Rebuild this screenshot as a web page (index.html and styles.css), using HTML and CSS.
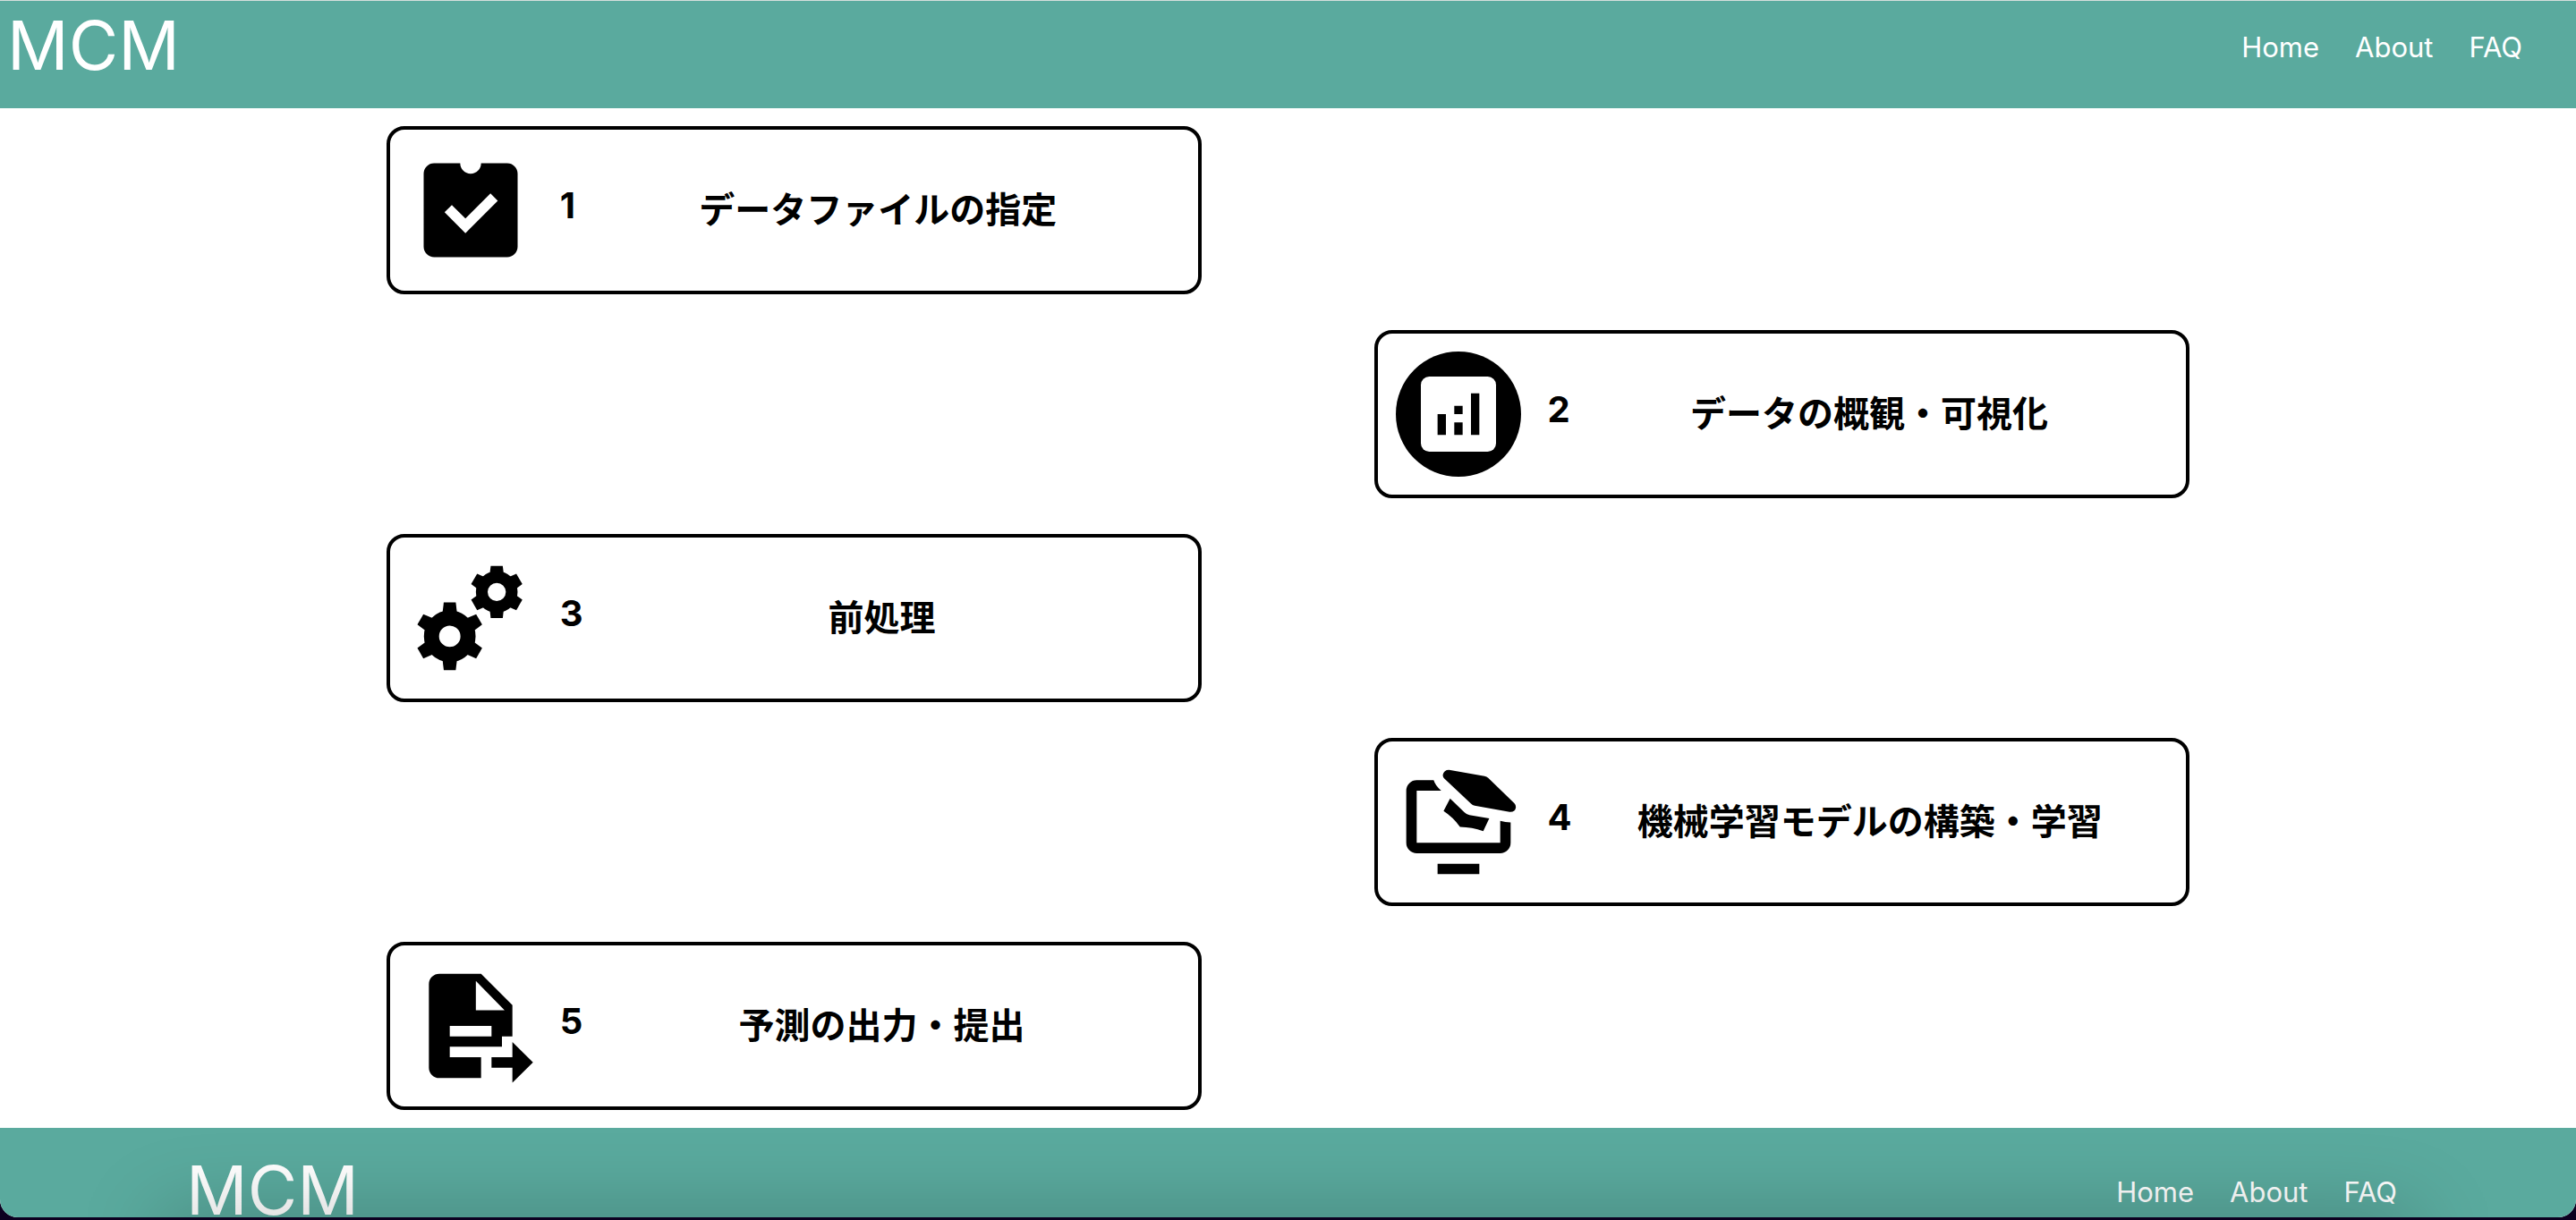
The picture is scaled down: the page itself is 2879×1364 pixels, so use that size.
FILE: index.html
```html
<!DOCTYPE html>
<html lang="ja">
<head>
<meta charset="utf-8">
<meta name="viewport" content="width=device-width, initial-scale=1">
<title>MCM</title>
<link rel="stylesheet" href="styles.css">
</head>
<body>
<div class="window">
  <header class="bar header">
    <a class="logo" href="#">MCM</a>
    <nav class="nav" aria-label="Main">
      <a href="#">Home</a>
      <a href="#">About</a>
      <a href="#">FAQ</a>
    </nav>
  </header>

  <main class="steps">
    <a class="card" href="#">
      <svg class="icon" viewBox="0 0 24 24" aria-hidden="true">
        <path fill-rule="evenodd" d="M5 3H10A2 2 0 0 0 14 3H19A2 2 0 0 1 21 5V19A2 2 0 0 1 19 21H5A2 2 0 0 1 3 19V5A2 2 0 0 1 5 3ZM7 12.4L11 16.4L17.2 10.2L15.8 8.8L11 13.6L8.4 11Z"/>
      </svg>
      <span class="number">1</span>
      <span class="title">データファイルの指定</span>
    </a>

    <a class="card card-right" href="#">
      <svg class="icon" viewBox="0 0 24 24" aria-hidden="true">
        <circle cx="12" cy="12" r="12"/>
        <rect x="4.8" y="4.8" width="14.4" height="14.4" rx="1.6" fill="#fff"/>
        <path d="M8 12H9.6V16H8ZM11.2 10.4H12.8V12H11.2ZM11.2 13.6H12.8V16H11.2ZM14.4 8H16V16H14.4Z"/>
      </svg>
      <span class="number">2</span>
      <span class="title">データの概観・可視化</span>
    </a>

    <a class="card" href="#">
      <svg class="icon" viewBox="0 0 24 24" aria-hidden="true">
        <defs>
          <path id="tooth-large" d="M-1.15 -6.5H1.15L1.4 -4.4H-1.4Z"/>
          <path id="tooth-small" d="M-1.15 -5H1.15L1.35 -3.3H-1.35Z"/>
        </defs>
        <g transform="translate(8 15.5)">
          <circle r="3.5" fill="none" stroke="#000" stroke-width="2.9"/>
          <use href="#tooth-large"/>
          <use href="#tooth-large" transform="rotate(60)"/>
          <use href="#tooth-large" transform="rotate(120)"/>
          <use href="#tooth-large" transform="rotate(180)"/>
          <use href="#tooth-large" transform="rotate(240)"/>
          <use href="#tooth-large" transform="rotate(300)"/>
        </g>
        <g transform="translate(17 7)">
          <circle r="2.87" fill="none" stroke="#000" stroke-width="2.25"/>
          <use href="#tooth-small"/>
          <use href="#tooth-small" transform="rotate(60)"/>
          <use href="#tooth-small" transform="rotate(120)"/>
          <use href="#tooth-small" transform="rotate(180)"/>
          <use href="#tooth-small" transform="rotate(240)"/>
          <use href="#tooth-small" transform="rotate(300)"/>
        </g>
      </svg>
      <span class="number">3</span>
      <span class="title">前処理</span>
    </a>

    <a class="card card-right" href="#">
      <svg class="icon" viewBox="0 0 24 24" aria-hidden="true">
        <path d="M7.25 4H4A2 2 0 0 0 2 6V16A2 2 0 0 0 4 18H20A2 2 0 0 0 22 16V12.1Q21 12.1 20 11.8V16H4V6H8.7Q7.6 5.1 7.25 4ZM8 20H16V22H8Z"/>
        <path d="M10.2 2L17 3.2Q17.4 3.25 17.7 3.55L22.7 8.4Q23 8.7 23 9.15Q22.9 10.1 21.8 10.05L15.1 8.85Q14.7 8.8 14.4 8.5L9.3 3.7Q9 3.4 9 3Q9.2 2 10.2 2Z"/>
        <path d="M10.4 7.5L13.1 10.1Q13.5 10.5 14.1 10.65L17.9 11.3L16.75 13.75Q14.6 13 12.3 12.95Q11 11.1 9.15 9.9Z"/>
      </svg>
      <span class="number">4</span>
      <span class="title">機械学習モデルの構築・学習</span>
    </a>

    <a class="card" href="#">
      <svg class="icon" viewBox="0 0 24 24" aria-hidden="true">
        <path fill-rule="evenodd" d="M14 2H6A2 2 0 0 0 4 4V20A2 2 0 0 0 6 22H14V18H8V16H18V14H20V8ZM13 3.4L18.5 9H13ZM8 12H16V14H8Z"/>
        <path d="M16 18H20V15.1L23.95 19L20 22.9V20H16Z"/>
      </svg>
      <span class="number">5</span>
      <span class="title">予測の出力・提出</span>
    </a>
  </main>

  <footer class="bar footer">
    <a class="logo" href="#">MCM</a>
    <nav class="nav" aria-label="Footer">
      <a href="#">Home</a>
      <a href="#">About</a>
      <a href="#">FAQ</a>
    </nav>
  </footer>
</div>
</body>
</html>
```
FILE: styles.css
```css
* {
  box-sizing: border-box;
}

body {
  margin: 0;
  padding-bottom: 3px;
  background: #0c0020;
  color: #000;
  font-family: Inter, "Noto Sans CJK JP", sans-serif;
}

a {
  color: inherit;
  text-decoration: none;
}

.window {
  overflow: hidden;
  border-top: 1px solid #d5dedc;
  border-radius: 0 0 20px 20px;
  background: #fff;
}

.bar {
  display: flex;
  justify-content: space-between;
  background: #5aaa9e;
  color: #fff;
}

.header {
  height: 120px;
  padding: 0 60px 0 8px;
}

.footer {
  position: relative;
  height: 100px;
  padding: 20px 200px 0 208px;
}

/* soft shade rising from the bottom edge */
.footer::after {
  content: "";
  position: absolute;
  top: 100%;
  left: 180px;
  right: 180px;
  height: 60px;
  box-shadow: 0 0 90px rgba(0, 0, 0, 0.26);
  pointer-events: none;
}

.logo {
  font-size: 76px;
  font-weight: 400;
  line-height: 98px;
}

.nav {
  display: flex;
  gap: 40px;
  padding-top: 32px;
  font-size: 31px;
  line-height: 40px;
}

.steps {
  display: flex;
  flex-direction: column;
  gap: 40px;
  width: 70%;
  margin: 0 auto;
  padding: 20px 0;
}

.card {
  display: flex;
  align-items: center;
  width: calc(50% - 96px);
  padding: 20px;
  border: 4px solid #000;
  border-radius: 20px;
  font-size: 40px;
  font-weight: 700;
  line-height: 48px;
}

.card-right {
  align-self: flex-end;
}

.icon {
  flex: none;
  width: 140px;
  height: 140px;
}

.number {
  padding: 0 0 10px 30px;
}

.title {
  flex: 1;
  text-align: center;
}
```
